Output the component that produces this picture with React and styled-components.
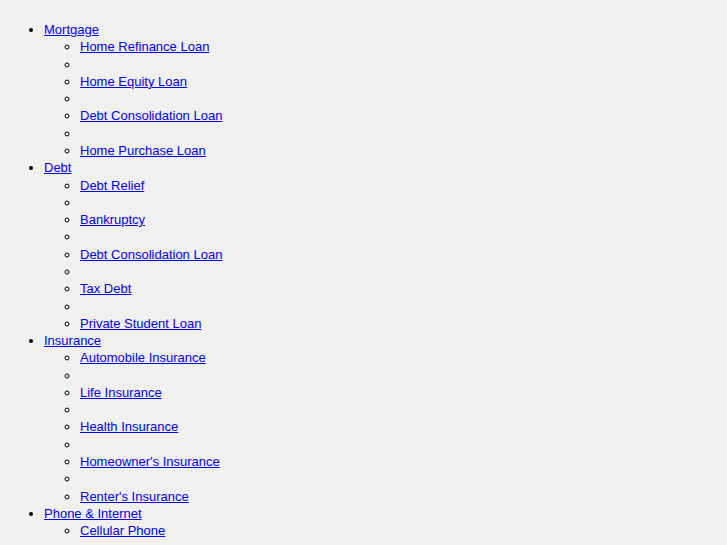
import React from 'react';
import styled, { createGlobalStyle } from 'styled-components';

const GlobalStyle = createGlobalStyle`
  html, body {
    background: #f0f0f0;
  }
  body {
    margin: 8px;
    font-family: "Liberation Sans", Arial, sans-serif;
    font-size: 13px;
    line-height: 1.33;
    color: #000;
  }
`;

const Menu = styled.ul`
  list-style: disc;
  margin: 13px 0;
  padding-left: 36px;
`;

const SubMenu = styled.ul`
  list-style: circle;
  margin: 0;
  padding-left: 36px;
`;

const Item = styled.li`
  min-height: 1.33em;
`;

const Link = styled.a`
  color: #0000ee;
  text-decoration: underline;
`;

const sections = [
  { title: 'Mortgage', items: ['Home Refinance Loan', 'Home Equity Loan', 'Debt Consolidation Loan', 'Home Purchase Loan'] },
  { title: 'Debt', items: ['Debt Relief', 'Bankruptcy', 'Debt Consolidation Loan', 'Tax Debt', 'Private Student Loan'] },
  { title: 'Insurance', items: ['Automobile Insurance', 'Life Insurance', 'Health Insurance', "Homeowner's Insurance", "Renter's Insurance"] },
  { title: 'Phone & Internet', items: ['Cellular Phone', 'Home Phone', 'Internet'] },
];

const App = () => (
  <>
    <GlobalStyle />
    <Menu>
      {sections.map(section => (
        <Item key={section.title}>
          <Link href="#">{section.title}</Link>
          <SubMenu>
            {section.items.map((item, i) => (
              <React.Fragment key={item}>
                {i > 0 && <Item />}
                <Item><Link href="#">{item}</Link></Item>
              </React.Fragment>
            ))}
          </SubMenu>
        </Item>
      ))}
    </Menu>
  </>
);

export default App;
